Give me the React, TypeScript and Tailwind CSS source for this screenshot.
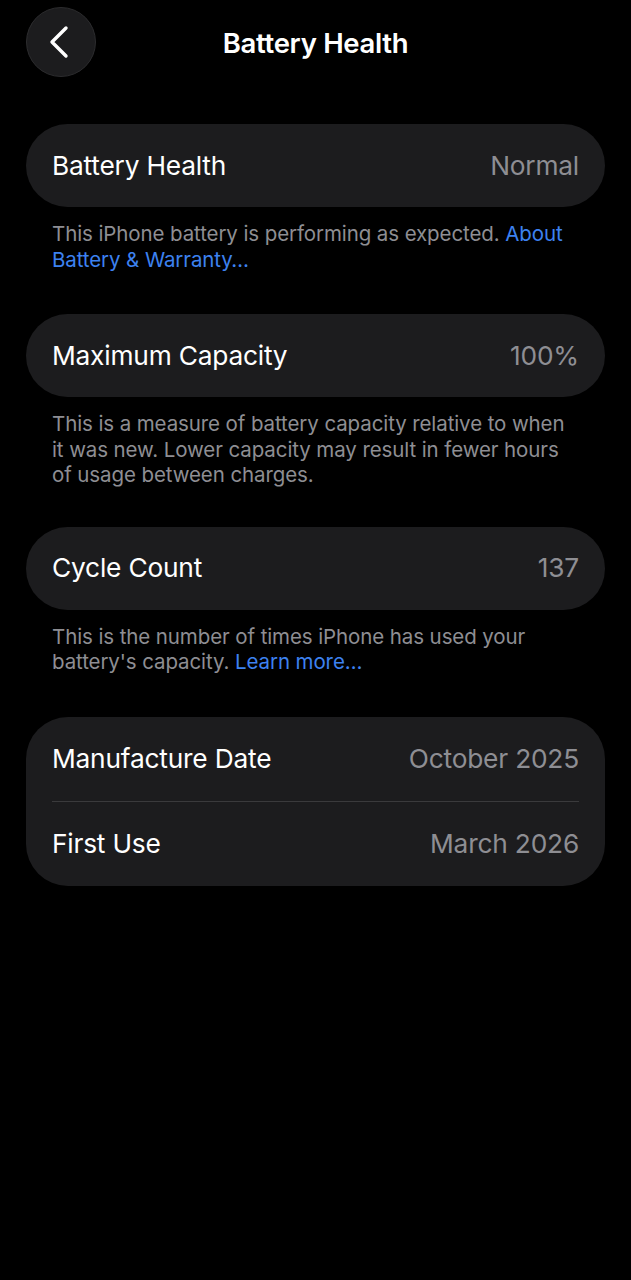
type Row = { label: string; value: string };

function Card({ rows }: { rows: Row[] }) {
  const single = rows.length === 1;
  return (
    <div
      className={`bg-[#1c1c1e] px-[26px] ${single ? "rounded-full" : "rounded-[42px]"}`}
    >
      {rows.map((r, i) => (
        <div
          key={r.label}
          className={`flex items-center justify-between ${single ? "h-[83px]" : "h-[84.5px]"} ${
            i > 0 ? "border-t border-[#3a3a3c]" : ""
          }`}
        >
          <span className="text-[26.3px] text-white tracking-[-0.2px]">{r.label}</span>
          <span className="text-[26.3px] text-[#8e8e93] tracking-[-0.2px]">{r.value}</span>
        </div>
      ))}
    </div>
  );
}

function Footnote({ children }: { children: React.ReactNode }) {
  return (
    <p className="px-[26px] pt-[14px] text-[20.5px] leading-[25.5px] text-[#8e8e93] tracking-[-0.1px]">
      {children}
    </p>
  );
}

export default function App() {
  return (
    <div
      className="min-h-[1280px] w-full bg-black text-white"
      style={{ fontFamily: "Inter, 'Noto Sans', sans-serif" }}
    >
      {/* Nav bar */}
      <div className="relative flex items-center justify-center h-[86px]">
        <button className="absolute left-[26px] top-[7px] w-[70px] h-[70px] rounded-full bg-[#1c1c1e] border border-[#2c2c2e] flex items-center justify-center">
          <svg width="24" height="34" viewBox="0 0 24 34" className="-ml-[5px]">
            <polyline
              points="19,3 5,17 19,31"
              fill="none"
              stroke="white"
              strokeWidth="3.4"
              strokeLinecap="round"
              strokeLinejoin="round"
            />
          </svg>
        </button>
        <h1 className="text-[27.5px] font-semibold tracking-[-0.3px] mt-[1px]">Battery Health</h1>
      </div>

      <div className="px-[26px] pt-[38px]">
        <Card rows={[{ label: "Battery Health", value: "Normal" }]} />
        <Footnote>
          This iPhone battery is performing as expected.{" "}
          <span className="text-[#3d82f0]">About Battery &amp; Warranty…</span>
        </Footnote>

        <div className="pt-[42px]">
          <Card rows={[{ label: "Maximum Capacity", value: "100%" }]} />
        </div>
        <Footnote>
          This is a measure of battery capacity relative to when it was new. Lower capacity may
          result in fewer hours of usage between charges.
        </Footnote>

        <div className="pt-[39px]">
          <Card rows={[{ label: "Cycle Count", value: "137" }]} />
        </div>
        <Footnote>
          This is the number of times iPhone has used your battery's capacity.{" "}
          <span className="text-[#3d82f0]">Learn more…</span>
        </Footnote>

        <div className="pt-[42px]">
          <Card
            rows={[
              { label: "Manufacture Date", value: "October 2025" },
              { label: "First Use", value: "March 2026" },
            ]}
          />
        </div>
      </div>
    </div>
  );
}
